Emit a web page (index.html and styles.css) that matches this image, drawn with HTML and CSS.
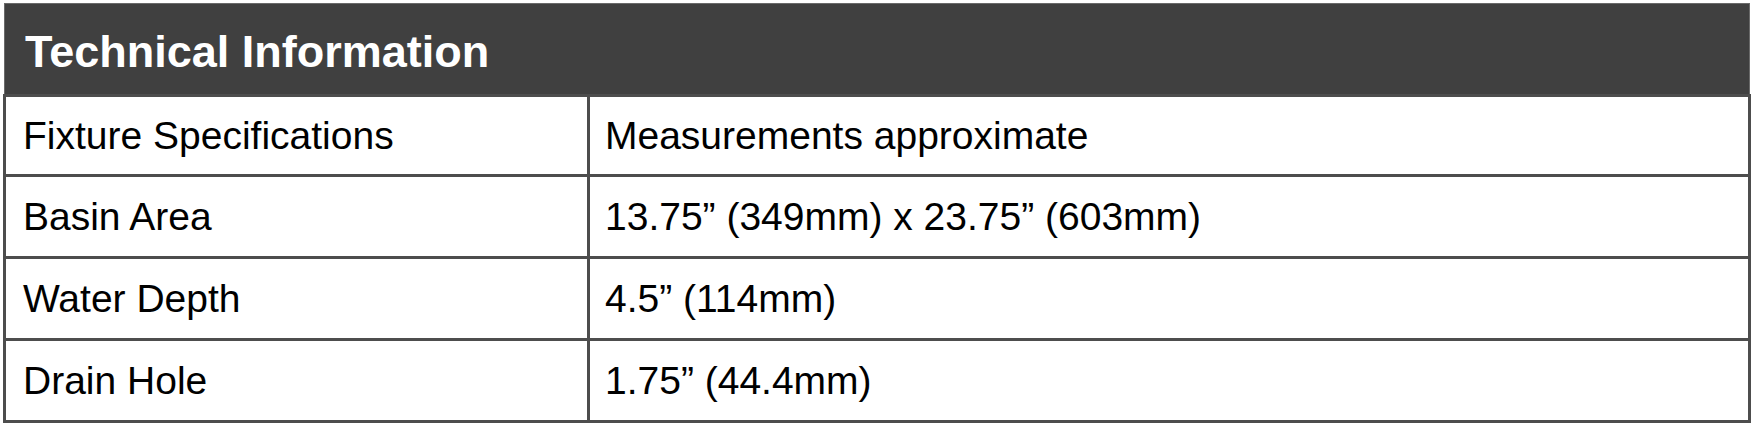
FILE: index.html
```html
<!DOCTYPE html>
<html>
<head>
<meta charset="utf-8">
<link rel="stylesheet" href="styles.css">
</head>
<body>
<table class="spec">
  <colgroup>
    <col class="col-label">
    <col class="col-value">
  </colgroup>
  <thead>
    <tr><th colspan="2" class="title">Technical Information</th></tr>
  </thead>
  <tbody>
    <tr class="first"><td class="label">Fixture Specifications</td><td class="value">Measurements approximate</td></tr>
    <tr><td class="label">Basin Area</td><td class="value">13.75” (349mm) x 23.75” (603mm)</td></tr>
    <tr><td class="label">Water Depth</td><td class="value">4.5” (114mm)</td></tr>
    <tr><td class="label">Drain Hole</td><td class="value">1.75” (44.4mm)</td></tr>
  </tbody>
</table>
</body>
</html>
```
FILE: styles.css
```css
html, body {
  margin: 0;
  padding: 0;
  background: #ffffff;
}
body {
  padding: 3px 0 0 3px;
  font-family: "Liberation Sans", Arial, sans-serif;
}
.spec {
  border-collapse: collapse;
  width: 1748px;
  table-layout: fixed;
}
.col-label {
  width: 584px;
}
.title {
  background: #404040;
  color: #ffffff;
  font-weight: bold;
  font-size: 45px;
  text-align: left;
  height: 92px;
  padding: 6px 0 0 20px;
  border: 1px solid #6a6a6a;
  border-bottom: 2px solid #555555;
  box-sizing: border-box;
}
.spec td {
  border: 3px solid #4d4d4d;
  font-size: 39px;
  color: #000000;
  height: 82px;
  padding: 0;
  box-sizing: border-box;
  vertical-align: middle;
}
.spec .first td {
  height: 80px;
}
.spec td.label {
  padding-left: 17px;
}
.spec td.value {
  padding-left: 15px;
}
```
